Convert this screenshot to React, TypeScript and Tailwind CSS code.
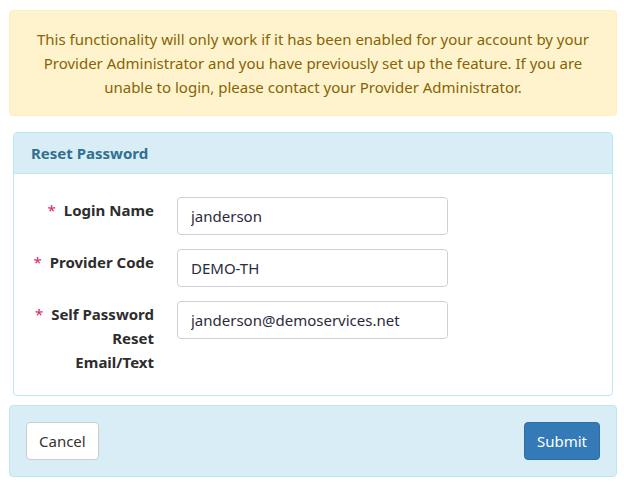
type Field = {
  label: string[];
  value: string;
};

const fields: Field[] = [
  { label: ['Login Name'], value: 'janderson' },
  { label: ['Provider Code'], value: 'DEMO-TH' },
  { label: ['Self Password', 'Reset', 'Email/Text'], value: 'janderson@demoservices.net' },
];

export default function App() {
  return (
    <div className="min-h-[486px] bg-white pl-[9px] pr-[7px] pt-[10px] font-['Noto_Sans',sans-serif] text-[15px] leading-[24px] text-[#333]">
      {/* Warning notice */}
      <div className="rounded-[4px] border border-[#ffeeba] bg-[#fff3cd] px-5 py-4 text-center text-[#856404]">
        This functionality will only work if it has been enabled for your account by your Provider Administrator and
        you have previously set up the feature. If you are unable to login, please contact your Provider Administrator.
      </div>

      {/* Reset panel */}
      <div className="mx-[4px] mt-4 rounded-[4px] border border-[#bce8f1] bg-white">
        <div className="rounded-t-[3px] border-b border-[#bce8f1] bg-[#d9edf7] px-[17px] py-[8px] font-bold text-[#31708f]">
          Reset Password
        </div>
        <div className="flex flex-col gap-[14px] pb-[21px] pl-[13px] pt-[23px]">
          {fields.map((f) => (
            <div key={f.value} className="flex items-start gap-[23px]">
              <label className="flex w-[127px] flex-col items-end pt-px text-right font-bold text-[#2d2d2d]">
                {f.label.map((line, i) => (
                  <span key={line}>
                    {i === 0 && <span className="mr-[8px] font-normal text-[#e0245e]">*</span>}
                    {line}
                  </span>
                ))}
              </label>
              <input
                type="text"
                defaultValue={f.value}
                className="h-[38px] w-[271px] rounded-[4px] border border-[#ccd0d6] bg-white px-[13px] text-[#2b2b3b] outline-none"
              />
            </div>
          ))}
        </div>
      </div>

      {/* Actions */}
      <div className="mt-[9px] flex items-center justify-between rounded-[4px] border border-[#bce8f1] bg-[#d9edf7] p-[16px]">
        <button
          type="button"
          className="h-[38px] rounded-[4px] border border-[#ccc] bg-white px-[12px] text-[#333]"
        >
          Cancel
        </button>
        <button
          type="button"
          className="h-[38px] rounded-[4px] border border-[#2e6da4] bg-[#337ab7] px-[12px] text-white"
        >
          Submit
        </button>
      </div>
    </div>
  );
}
